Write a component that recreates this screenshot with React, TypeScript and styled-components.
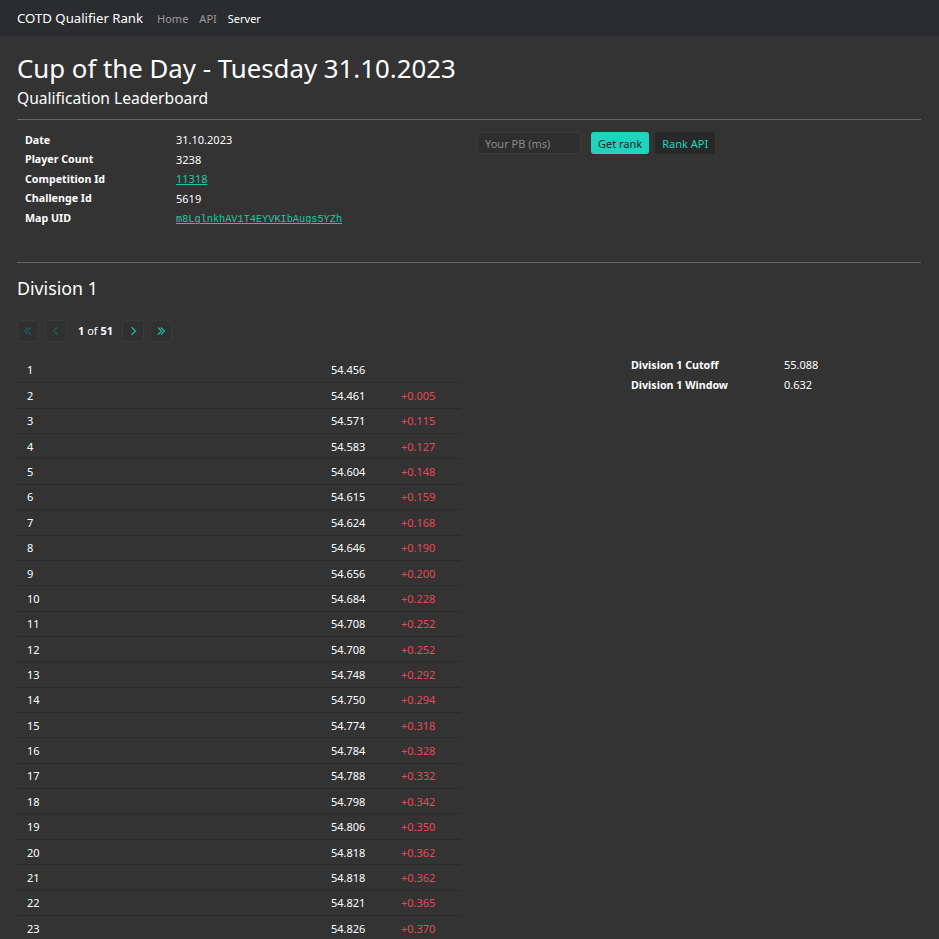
import React from 'react'
import styled, { createGlobalStyle } from 'styled-components'

const times = [
  54.456, 54.461, 54.571, 54.583, 54.604, 54.615, 54.624, 54.646, 54.656, 54.684, 54.708, 54.708,
  54.748, 54.75, 54.774, 54.784, 54.788, 54.798, 54.806, 54.818, 54.818, 54.821, 54.826
]

const info = [
  { label: 'Date', value: '31.10.2023' },
  { label: 'Player Count', value: '3238' },
  { label: 'Competition Id', value: '11318', link: true },
  { label: 'Challenge Id', value: '5619' },
  { label: 'Map UID', value: 'm8LglnkhAV1T4EYVKIbAugs5YZh', link: true, mono: true }
]

const Chevron = ({ double, left }: { double?: boolean; left?: boolean }) => (
  <svg width="10" height="10" viewBox="0 0 10 10" fill="none" stroke="currentColor" strokeWidth="1.2">
    <g transform={left ? 'translate(10 0) scale(-1 1)' : undefined}>
      {double ? (
        <>
          <path d="M2 1.5 L5.5 5 L2 8.5" />
          <path d="M5 1.5 L8.5 5 L5 8.5" />
        </>
      ) : (
        <path d="M3.5 1 L7.5 5 L3.5 9" />
      )}
    </g>
  </svg>
)

export default function App() {
  return (
    <>
      <GlobalStyle />
      <Nav>
        <Brand>COTD Qualifier Rank</Brand>
        <NavLink>Home</NavLink>
        <NavLink>API</NavLink>
        <NavLink active>Server</NavLink>
      </Nav>
      <Container>
        <Title>Cup of the Day - Tuesday 31.10.2023</Title>
        <Subtitle>Qualification Leaderboard</Subtitle>
        <Rule />
        <InfoRow>
          <InfoTable>
            <tbody>
              {info.map((r) => (
                <tr key={r.label}>
                  <Label>{r.label}</Label>
                  <Value>
                    {r.link ? <Link mono={r.mono}>{r.value}</Link> : r.value}
                  </Value>
                </tr>
              ))}
            </tbody>
          </InfoTable>
          <RankForm>
            <PbInput placeholder="Your PB (ms)" />
            <PrimaryButton>Get rank</PrimaryButton>
            <DarkButton>Rank API</DarkButton>
          </RankForm>
        </InfoRow>
        <Rule />
        <DivisionTitle>Division 1</DivisionTitle>
        <Pager>
          <PageButton disabled>
            <Chevron double left />
          </PageButton>
          <PageButton disabled>
            <Chevron left />
          </PageButton>
          <PageText>
            <b>1</b> of <b>51</b>
          </PageText>
          <PageButton>
            <Chevron />
          </PageButton>
          <PageButton>
            <Chevron double />
          </PageButton>
        </Pager>
        <DivisionRow>
          <Leaderboard>
            <tbody>
              {times.map((t, i) => (
                <tr key={i}>
                  <RankCell>{i + 1}</RankCell>
                  <TimeCell>{t.toFixed(3)}</TimeCell>
                  <DiffCell>{i === 0 ? '' : '+' + (t - times[0]).toFixed(3)}</DiffCell>
                </tr>
              ))}
            </tbody>
          </Leaderboard>
          <CutoffTable>
            <tbody>
              <tr>
                <CutoffLabel>Division 1 Cutoff</CutoffLabel>
                <CutoffValue>55.088</CutoffValue>
              </tr>
              <tr>
                <CutoffLabel>Division 1 Window</CutoffLabel>
                <CutoffValue>0.632</CutoffValue>
              </tr>
            </tbody>
          </CutoffTable>
        </DivisionRow>
      </Container>
    </>
  )
}

const GlobalStyle = createGlobalStyle`
  body {
    margin: 0;
    background: #333333;
    color: #ffffff;
    font-family: 'Noto Sans', 'Open Sans', sans-serif;
  }
`

const Nav = styled.nav`
  height: 36px;
  background: #2a2c2f;
  display: flex;
  align-items: center;
  padding: 0 17px;
`

const Brand = styled.span`
  font-size: 13.2px;
  color: #fff;
  margin-right: 14px;
`

const NavLink = styled.span<{ active?: boolean }>`
  font-size: 11px;
  color: ${(p) => (p.active ? '#ffffff' : '#9a9a9a')};
  margin-right: 11px;
`

const Container = styled.main`
  padding: 0 18px 0 17px;
`

const Title = styled.h1`
  margin: 0;
  padding-top: 14px;
  font-size: 25.8px;
  font-weight: 400;
  line-height: 36px;
`

const Subtitle = styled.h2`
  margin: 0;
  font-size: 15.6px;
  font-weight: 400;
  line-height: 24px;
`

const Rule = styled.hr`
  border: 0;
  border-top: 1px solid #646464;
  margin: 9px 0 0;
`

const InfoRow = styled.section`
  display: grid;
  grid-template-columns: 452px 1fr;
  padding: 10px 0 25px;
`

const InfoTable = styled.table`
  border-collapse: collapse;
  font-size: 11px;
  align-self: start;
  td {
    height: 19.5px;
    padding: 0 8px;
  }
`

const Label = styled.td`
  font-weight: 700;
  font-size: 10.7px;
  width: 135px;
`

const Value = styled.td``

const Link = styled.a<{ mono?: boolean }>`
  color: #1fc7a6;
  text-decoration: underline;
  font-family: ${(p) => (p.mono ? "'Liberation Mono', monospace" : 'inherit')};
  font-size: ${(p) => (p.mono ? '10.25px' : 'inherit')};
`

const RankForm = styled.form`
  display: flex;
  align-items: center;
  gap: 6px;
  padding: 2px 8px 0;
  align-self: start;
`

const PbInput = styled.input`
  width: 104px;
  height: 22px;
  box-sizing: border-box;
  background: #2e2e2e;
  border: 1px solid #3b3b3b;
  border-radius: 3px;
  color: #fff;
  padding: 0 7px;
  font-family: inherit;
  font-size: 11px;
  margin-right: 4px;
  &::placeholder {
    color: #8a8a8a;
  }
`

const Button = styled.button`
  height: 22px;
  border: 0;
  border-radius: 3px;
  padding: 0 7px;
  font-family: inherit;
  font-size: 11px;
`

const PrimaryButton = styled(Button)`
  background: #1ed4bd;
  color: #1e1e1e;
`

const DarkButton = styled(Button)`
  background: #282828;
  color: #1ed4bd;
`

const DivisionTitle = styled.h3`
  margin: 13px 0 0;
  font-size: 17.8px;
  font-weight: 400;
  line-height: 24px;
`

const Pager = styled.div`
  display: flex;
  align-items: center;
  gap: 6px;
  margin-top: 20px;
`

const PageButton = styled.button<{ disabled?: boolean }>`
  width: 22px;
  height: 22px;
  box-sizing: border-box;
  display: flex;
  align-items: center;
  justify-content: center;
  background: #303030;
  border: 1px solid #3a3a3a;
  border-radius: 3px;
  padding: 0;
  color: ${(p) => (p.disabled ? '#1d5e54' : '#20b89d')};
`

const PageText = styled.span`
  font-size: 11px;
  margin: 0 3px 0 5px;
`

const DivisionRow = styled.section`
  display: grid;
  grid-template-columns: 444px 1fr;
  gap: 8px;
  margin-top: 16px;
`

const Leaderboard = styled.table`
  border-collapse: collapse;
  font-size: 11px;
  tr {
    height: 25.36px;
    border-bottom: 1px solid #2a2a2a;
  }
  tr:last-child {
    border-bottom: 0;
  }
  td {
    padding: 0 10px;
  }
`

const RankCell = styled.td``

const TimeCell = styled.td`
  width: 50px;
`

const DiffCell = styled.td`
  width: 50px;
  color: #e5485a;
`

const CutoffTable = styled.table`
  border-collapse: collapse;
  font-size: 11px;
  align-self: start;
  margin: -3px 0 0 154px;
  td {
    height: 20px;
    padding: 0 8px;
  }
`

const CutoffLabel = styled.td`
  font-weight: 700;
  font-size: 10.7px;
  width: 137px;
`

const CutoffValue = styled.td``
